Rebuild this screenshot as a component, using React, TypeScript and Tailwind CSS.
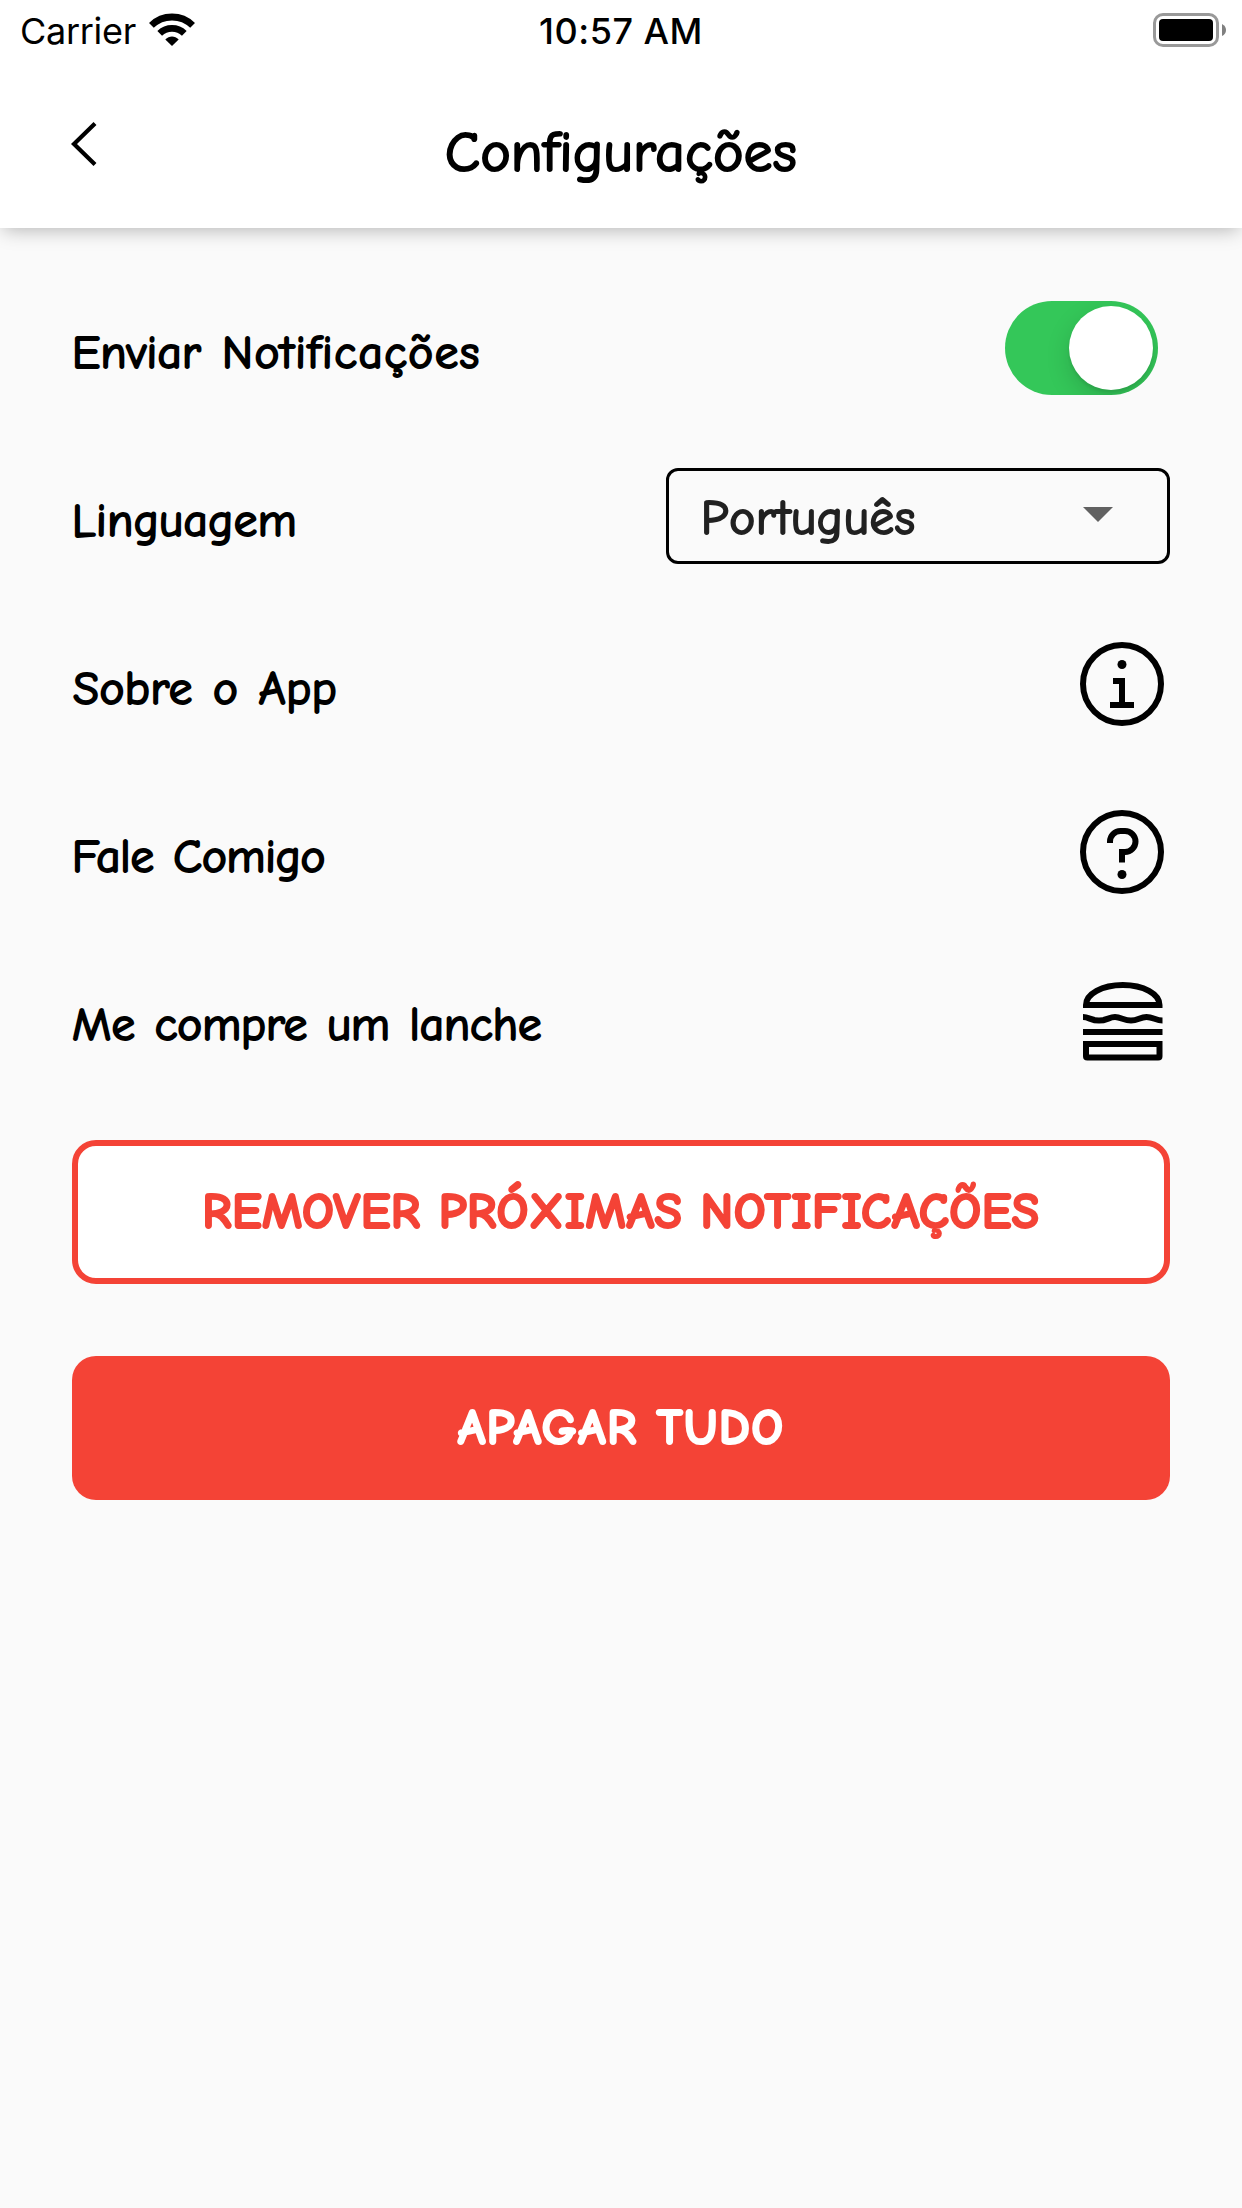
import type { ReactNode } from "react";

function StatusBar() {
  return (
    <div className="grid h-[60px] grid-cols-3 items-start pl-[20px] pr-[16px] text-[36px] leading-[62px] text-black font-['Inter','Liberation_Sans',sans-serif]">
      <div className="flex items-start gap-[13px]">
        <span className="tracking-[-0.3px]">Carrier</span>
        <svg className="mt-[13px] h-[33px] w-[46px]" viewBox="0 0 46 33" fill="none">
          <path d="M2.4 12.4C13.8 1.2 32.2 1.2 43.6 12.4" stroke="#000" strokeWidth="6.8" />
          <path d="M10.7 20.4C17.6 13.8 28.4 13.8 35.3 20.4" stroke="#000" strokeWidth="6.8" />
          <path d="M16.3 26.4C20.2 22.5 25.8 22.5 29.7 26.4L23 33Z" fill="#000" />
        </svg>
      </div>
      <span className="pr-[4px] text-center font-medium tracking-[0.5px]">10:57 AM</span>
      <div className="flex items-center justify-end gap-[3px] pt-[13px]">
        <div className="h-[34px] w-[66px] rounded-[10px] border-[3px] border-[#999] p-[3px]">
          <div className="h-full w-full rounded-[4px] bg-black" />
        </div>
        <svg className="h-[12px] w-[4px]" viewBox="0 0 4 12" fill="#808080">
          <path d="M0 0Q4 2 4 6T0 12Z" />
        </svg>
      </div>
    </div>
  );
}

/* Joins the letters "fi" with the font's ligature. */
function Fi() {
  return <span className="[font-feature-settings:'liga'_1]">fi</span>;
}

function Header() {
  return (
    <header className="h-[228px] bg-white shadow-[0_5px_18px_-3px_rgba(0,0,0,0.28)]">
      <StatusBar />
      <div className="grid h-[168px] grid-cols-[140px_1fr_140px] items-center">
        <svg className="ml-[69px] h-[48px] w-[30px]" viewBox="0 0 30 48" fill="none" stroke="#000" strokeWidth="4.2">
          <path d="M26 3.500L5 24l21 20.500" />
        </svg>
        <h1 className="pt-[17px] text-center text-[57px] leading-[60px] tracking-[0.5px] [-webkit-text-stroke:2.2px_currentColor]">
          Con<Fi />gurações
        </h1>
      </div>
    </header>
  );
}

function Row({ label, tracking, children }: { label: ReactNode; tracking: string; children: ReactNode }) {
  return (
    <div className="flex h-[96px] items-center justify-between">
      <span className={`pt-[9px] text-[47px] leading-[60px] [word-spacing:4px] [-webkit-text-stroke:2px_currentColor] ${tracking}`}>{label}</span>
      {children}
    </div>
  );
}

function InfoIcon() {
  return (
    <svg className="h-[96px] w-[96px]" viewBox="0 0 32 32">
      <circle cx="16" cy="16" r="13" fill="none" stroke="#000" strokeWidth="2" />
      <path d="M17 22v-8h-4v2h2v6h-3v2h8v-2z" />
      <circle cx="16" cy="9.500" r="1.500" />
    </svg>
  );
}

function HelpIcon() {
  return (
    <svg className="h-[96px] w-[96px]" viewBox="0 0 32 32">
      <circle cx="16" cy="16" r="13" fill="none" stroke="#000" strokeWidth="2" />
      <circle cx="16" cy="23.500" r="1.500" />
      <path d="M17 8h-1.500A4.490 4.490 0 0 0 11 12.500v.5h2v-.5A2.500 2.500 0 0 1 15.500 10H17a2.500 2.500 0 0 1 0 5h-2v4.500h2V17a4.500 4.500 0 0 0 0-9z" />
    </svg>
  );
}

function BurgerIcon() {
  return (
    <svg className="h-[96px] w-[96px]" viewBox="0 0 96 96" fill="none" stroke="#000" strokeWidth="6">
      <path d="M12 33C12 22 28 13 48.800 13S85.500 22 85.500 33Z" />
      <path d="M9 45C15 45 17 48.600 25 48.600S35 45 41 45S50 48.600 57 48.600S66 45 72.500 45S82 48.500 88.500 48.500" />
      <path d="M9 60H88.500" />
      <path d="M12 72H85.500V84.200Q85.500 85.500 84.200 85.500H13.300Q12 85.500 12 84.200Z" />
    </svg>
  );
}

export default function App() {
  return (
    <div className="flex min-h-[2208px] w-full flex-col bg-[#fafafa] text-black font-['Comic_Neue','Inter',sans-serif] [font-feature-settings:'liga'_0]">
      <Header />
      <main className="flex flex-col gap-[72px] px-[72px] pt-[72px]">
        <Row
          label={<><span className="tracking-[0.2px]">Enviar</span> Noti<Fi />cações</>}
          tracking="tracking-[1.500px]"
        >
          <div className="mr-[12px] flex h-[94px] w-[153px] items-center justify-end overflow-hidden rounded-full bg-[#34c759] pr-[5px]">
            <div className="h-[84px] w-[84px] rounded-full bg-white shadow-[0_9px_24px_rgba(0,0,0,0.15),0_3px_3px_rgba(0,0,0,0.08)]" />
          </div>
        </Row>
        <Row label="Linguagem" tracking="tracking-[0.5px]">
          <div className="flex h-[96px] w-[504px] items-center justify-between rounded-[12px] border-[3px] border-black pl-[32px] pr-[54px]">
            <span className="pt-[4px] text-[49px] leading-[60px] tracking-[0.8px] text-[#212121] [-webkit-text-stroke:2px_currentColor] [font-kerning:none]">Português</span>
            <svg className="mb-[3px] h-[15px] w-[30px]" viewBox="0 0 30 15" fill="#616161">
              <path d="M0 0H30L15 15Z" />
            </svg>
          </div>
        </Row>
        <Row label={<span className="ml-[1px]">Sobre o App</span>} tracking="tracking-[0.5px]"><InfoIcon /></Row>
        <Row label="Fale Comigo" tracking="tracking-[-0.2px]"><HelpIcon /></Row>
        <Row label="Me compre um lanche" tracking="tracking-[0px]"><BurgerIcon /></Row>
        <button className="flex h-[144px] items-center justify-center rounded-[24px] border-[6px] border-[#f44336] bg-white text-[50px] font-bold tracking-[0.5px] text-[#f44336] [-webkit-text-stroke:2px_currentColor]">
          REMOVER PRÓXIMAS NOTIFICAÇÕES
        </button>
        <button className="flex h-[144px] items-center justify-center rounded-[24px] bg-[#f44336] text-[50px] font-bold tracking-[1.300px] text-white [-webkit-text-stroke:2px_currentColor]">
          APAGAR TUDO
        </button>
      </main>
    </div>
  );
}
